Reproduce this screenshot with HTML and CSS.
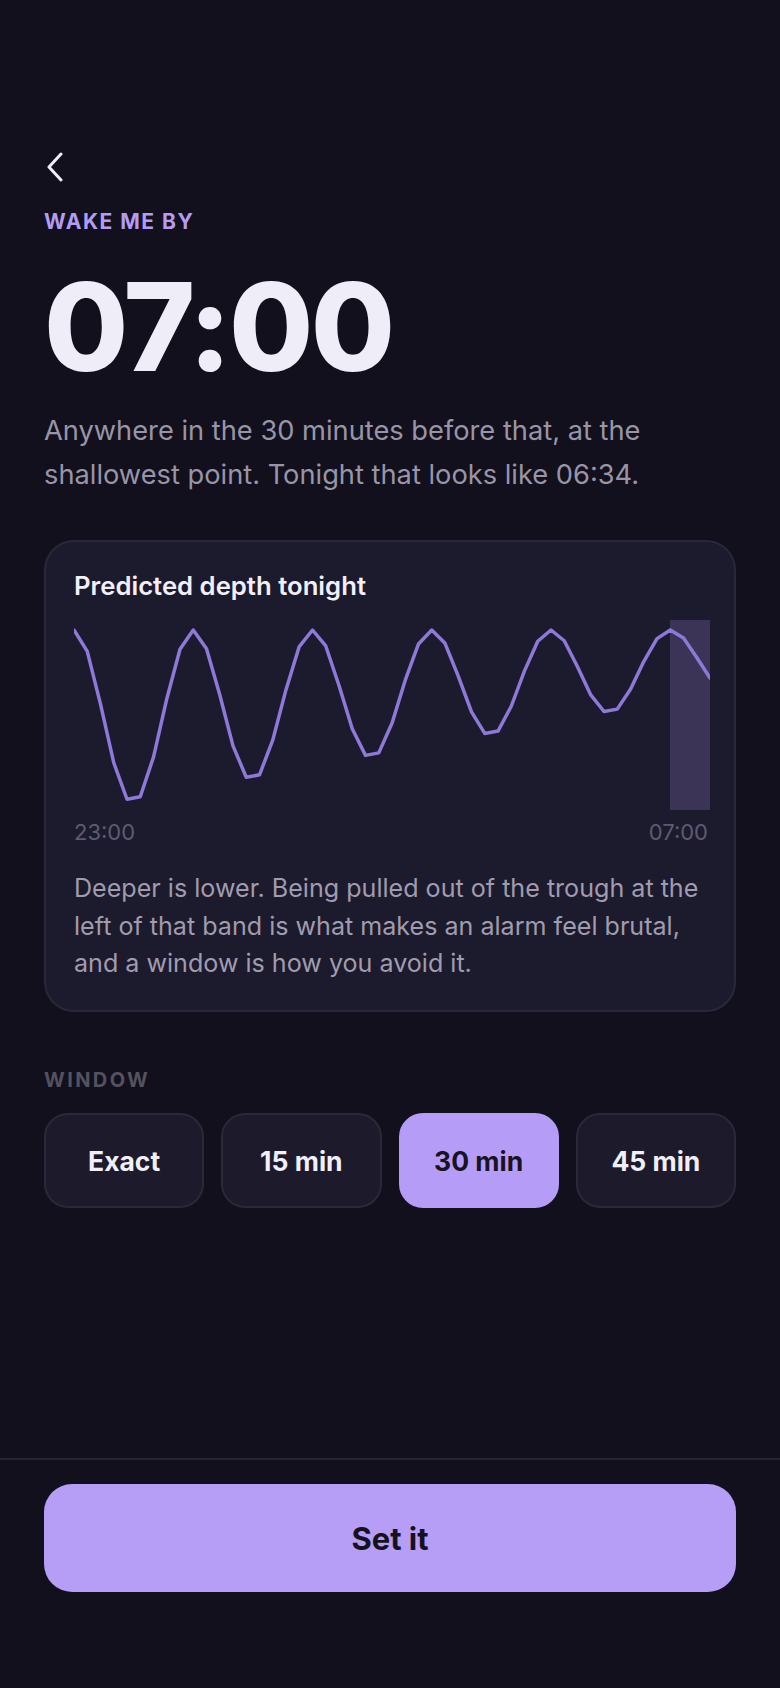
FILE: index.html
```html
<!DOCTYPE html>
<html lang="en">
<head>
<meta charset="utf-8">
<title>Wake me by</title>
<link rel="stylesheet" href="styles.css">
</head>
<body>
<div class="screen">
  <main class="content">
    <button class="back" aria-label="Back">
      <svg width="18" height="30" viewBox="0 0 18 30" fill="none" stroke="#efedf8" stroke-width="3" stroke-linecap="round" stroke-linejoin="round"><path d="M15 2 L3 15 L15 28"/></svg>
    </button>
    <div class="eyebrow">WAKE ME BY</div>
    <h1 class="time">07:00</h1>
    <p class="intro">Anywhere in the 30 minutes before that, at the shallowest point. Tonight that looks like 06:34.</p>
    <section class="card">
      <h2 class="card-title">Predicted depth tonight</h2>
      <div class="chart">
        <svg class="chart-svg" width="636" height="190" viewBox="0 0 636 190">
          <rect class="band" x="596" y="0" width="40" height="190"/>
          <polyline class="line" transform="translate(0,10) scale(1,1.025) translate(0,-8)" points="0,8 13.25,28.8 26.5,80.3 39.75,137.5 53,173.1 66.25,170.7 79.5,132 92.75,75.3 106,26.8 119.25,8 132.5,26.2 145.75,71.2 159,121 172.25,151.7 185.5,149.3 198.75,115.4 212,66.2 225.25,24.2 238.5,8 251.75,23.6 265,62.1 278.25,104.4 291.5,130.3 304.75,127.9 318,98.9 331.25,57 344.5,21.6 357.75,8 371,21 384.25,53 397.5,87.9 410.75,108.9 424,106.6 437.25,82.4 450.5,47.9 463.75,19 477,8 490.25,18.5 503.5,43.9 516.75,71.3 530,87.5 543.25,85.2 556.5,65.8 569.75,38.8 583,16.4 596.25,8 609.5,15.9 622.75,34.8 636,54.8"/>
        </svg>
        <div class="axis"><span>23:00</span><span>07:00</span></div>
      </div>
      <p class="card-note">Deeper is lower. Being pulled out of the trough at the left of that band is what makes an alarm feel brutal, and a window is how you avoid it.</p>
    </section>
    <div class="section-label">WINDOW</div>
    <div class="options">
      <button class="option">Exact</button>
      <button class="option">15 min</button>
      <button class="option is-selected">30 min</button>
      <button class="option">45 min</button>
    </div>
  </main>
  <footer class="footer">
    <button class="cta">Set it</button>
  </footer>
</div>
</body>
</html>
```

FILE: styles.css
```css
* { box-sizing: border-box; margin: 0; padding: 0; }
html, body { background: #12101c; }
body {
  font-family: Inter, "Noto Sans", "DejaVu Sans", sans-serif;
  color: #efedf8;
  width: 780px;
  min-height: 1688px;
}
button { font: inherit; color: inherit; cursor: pointer; }
.screen { display: flex; flex-direction: column; min-height: 1688px; }
.content { flex: 1; padding: 152px 44px 0; display: flex; flex-direction: column; }
.back { display: block; width: 18px; height: 30px; margin-left: 2px; background: none; border: 0; }
.back svg { display: block; }
.eyebrow {
  margin-top: 26px;
  font-size: 21px; line-height: 28px; font-weight: 700;
  letter-spacing: 1.5px; color: #b39cf4;
}
.time {
  margin-top: 27px;
  font-size: 122px; line-height: 128px; font-weight: 800;
  letter-spacing: -0.021em; color: #efedf8;
}
.intro { margin-top: 18px; font-size: 27.25px; line-height: 44px; color: #9995a8; }
.card {
  margin-top: 43px;
  background: #1c1a2d;
  border: 2px solid #29273a;
  border-radius: 30px;
  padding: 28px 26px 27px 28px;
}
.card-title { font-size: 25.7px; line-height: 31px; font-weight: 600; color: #f1eff9; }
.chart { margin-top: 19px; }
.chart-svg { display: block; }
.band { fill: #3b3456; }
.line { fill: none; stroke: #8e78d8; stroke-width: 3.5; stroke-linejoin: round; stroke-linecap: round; vector-effect: non-scaling-stroke; }
.axis { display: flex; justify-content: space-between; width: 634px; margin-top: 8px; font-size: 22px; line-height: 28px; color: #5f5a72; }
.card-note { margin-top: 24px; font-size: 25.1px; line-height: 37.7px; color: #a09cae; }
.section-label {
  margin-top: 55px;
  font-size: 20px; line-height: 26px; font-weight: 700;
  letter-spacing: 0.12em; color: #55525f;
}
.options { margin-top: 20px; display: grid; grid-template-columns: repeat(4, 1fr); gap: 17px; }
.option {
  height: 95px;
  display: flex; align-items: center; justify-content: center;
  background: #1c1a2b;
  border: 2px solid #2b2939;
  border-radius: 24px;
  font-size: 26.5px; font-weight: 700; color: #f1eff9;
}
.option.is-selected { background: #b59cf6; border-color: #b59cf6; color: #17131f; }
.footer { border-top: 2px solid #262433; padding: 24px 44px 96px; }
.cta {
  display: flex; align-items: center; justify-content: center;
  width: 100%; height: 108px;
  background: #b69df6; border: 0; border-radius: 28px;
  font-size: 31px; font-weight: 700; color: #15121f;
}
```
